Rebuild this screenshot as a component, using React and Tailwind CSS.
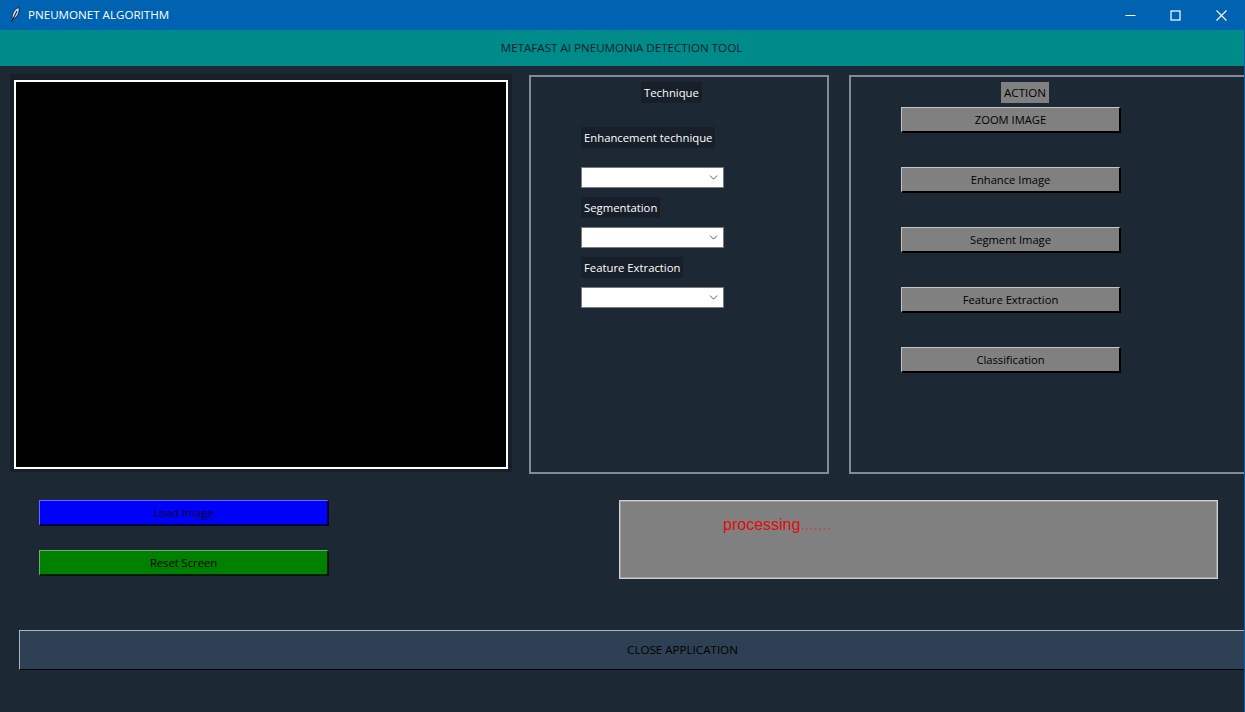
import { ChevronDown } from "lucide-react"

const actions = ["ZOOM IMAGE", "Enhance Image", "Segment Image", "Feature Extraction", "Classification"]

function Feather() {
  return (
    <svg width="16" height="18" viewBox="0 0 16 18" fill="none" className="ml-[7px] shrink-0">
      <path d="M12 1.5 C8.5 2.5 5.5 6 5 11.5 L6.5 13 C10 11 12.8 6.5 12 1.5 Z" fill="#dbe6f7" stroke="#0b1c3a" strokeWidth="0.9" />
      <path d="M10 5 L4.5 16" stroke="#0b1c3a" strokeWidth="1.1" />
    </svg>
  )
}

function TitleBar() {
  return (
    <div className="flex h-[30px] items-center bg-[#0063b1] text-[11.6px] text-white">
      <Feather />
      <span className="ml-[5px]">PNEUMONET ALGORITHM</span>
      <div className="ml-auto flex items-center">
        <svg width="11" height="11" viewBox="0 0 11 11" className="mr-[34px]">
          <path d="M0.5 5.5 H10.5" stroke="white" strokeWidth="1" />
        </svg>
        <svg width="11" height="11" viewBox="0 0 11 11" className="mr-[35px]">
          <rect x="1" y="1" width="9" height="9" fill="none" stroke="white" strokeWidth="1.2" />
        </svg>
        <svg width="11" height="11" viewBox="0 0 11 11" className="mr-[17px]">
          <path d="M0.5 0.5 L10.5 10.5 M10.5 0.5 L0.5 10.5" stroke="white" strokeWidth="1.1" />
        </svg>
      </div>
    </div>
  )
}

function Dropdown({ className }) {
  return (
    <div className={`flex h-[21px] w-[143px] items-center justify-end border border-[#7a7a7a] bg-white pr-[3px] text-[#333] ${className}`}>
      <ChevronDown size={13} strokeWidth={1.5} />
    </div>
  )
}

function Label({ children, className }) {
  return (
    <div className={`flex h-[21px] w-fit items-center bg-[#17202a] px-[3px] pt-px text-[11.3px] text-white ${className}`}>
      {children}
    </div>
  )
}

function RaisedButton({ children, className }) {
  return (
    <button
      type="button"
      className={`flex h-[26px] items-center justify-center border-t border-l border-r-2 border-b-2 pt-px text-[11.2px] text-black ${className}`}
    >
      {children}
    </button>
  )
}

export default function App() {
  return (
    <div
      className="h-[712px] w-[1245px] overflow-hidden border-r border-[#0063b1] bg-[#1c2833]"
      style={{ fontFamily: '"Open Sans", "Noto Sans", sans-serif' }}
    >
      <TitleBar />
      <div className="flex h-9 items-center justify-center bg-[#008b8b] pr-px text-[11.6px] text-[#10202a]">
        METAFAST AI PNEUMONIA DETECTION TOOL
      </div>

      <div className="mt-2 flex h-[400px] items-start pl-[10px]">
        <div className="h-[398px] w-[502px] shrink-0 bg-[#17202a] pl-1 pt-[6px]">
          <div className="h-[389px] w-[494px] border-2 border-white bg-black" />
        </div>

        <div className="ml-[17px] mt-px h-[399px] w-[300px] shrink-0 border-2 border-[#808b96] pl-[50px] pt-[5px]">
          <Label className="ml-[60px]">Technique</Label>
          <Label className="mt-6">Enhancement technique</Label>
          <Dropdown className="mt-[19px]" />
          <Label className="mt-[9px]">Segmentation</Label>
          <Dropdown className="mt-[9px]" />
          <Label className="mt-[9px]">Feature Extraction</Label>
          <Dropdown className="mt-[9px]" />
        </div>

        <div className="ml-5 mt-px h-[399px] w-[420px] shrink-0 border-2 border-[#808b96] pl-[50px] pt-[5px]">
          <div className="ml-[100px] flex h-[21px] w-fit items-center bg-[#808080] px-[3px] text-[11.6px] text-black">
            ACTION
          </div>
          <div className="mt-1 flex flex-col gap-[34px]">
            {actions.map((action) => (
              <RaisedButton
                key={action}
                className="w-[220px] border-t-[#c4c4c4] border-l-[#c4c4c4] border-b-black border-r-black bg-[#808080]"
              >
                {action}
              </RaisedButton>
            ))}
          </div>
        </div>
      </div>

      <div className="mt-[26px] flex items-start pl-[39px]">
        <div className="flex w-[290px] flex-col gap-[24px]">
          <RaisedButton className="border-t-[#6666ff] border-l-[#6666ff] border-b-[#000033] border-r-[#000033] bg-[#0000ff] text-[#00006e]">
            Load Image
          </RaisedButton>
          <RaisedButton className="border-t-[#66b266] border-l-[#66b266] border-b-[#001a00] border-r-[#001a00] bg-[#008000]">
            Reset Screen
          </RaisedButton>
        </div>
        <div
          className="ml-[290px] h-[79px] w-[599px] border border-[#d0d0d0] bg-[#808080] pl-[103px] pt-[14px] text-base leading-[20px] text-[#e00b0b] shadow-[inset_0_0_0_1px_#a0a0a0]"
          style={{ fontFamily: '"Liberation Sans", Arial, sans-serif' }}
        >
          processing<span className="text-[#b84a4a]">.......</span>
        </div>
      </div>

      <div className="ml-[19px] mt-[51px] flex h-10 w-[1326px] items-center justify-center border-l border-t border-b border-t-[#aab4be] border-l-[#aab4be] border-b-black bg-[#2e4053] text-[11.6px] text-black">
        CLOSE APPLICATION
      </div>
    </div>
  )
}
